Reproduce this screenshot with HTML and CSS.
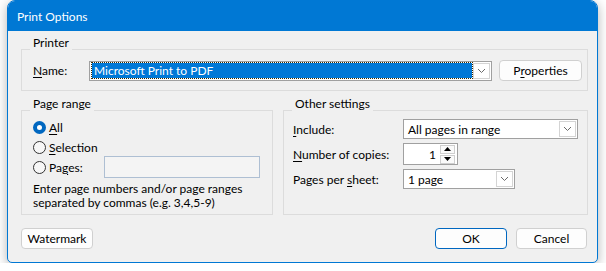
FILE: index.html
```html
<!DOCTYPE html>
<html lang="en">
<head>
    <meta charset="UTF-8">
    <meta name="viewport" content="width=device-width, initial-scale=1.0">
    <title>Print Options</title>
    <link rel="stylesheet" href="styles.css">
</head>
<body>
    <div class="window">
        <div class="titlebar">Print Options</div>

        <div class="dialog-body">
            <!-- Printer -->
            <div class="group printer-group">
                <span class="group-title">Printer</span>
                <div class="printer-row">
                    <span class="field-label name-label"><u>N</u>ame:</span>
                    <div class="combo name-combo">
                        <span class="combo-value"><span class="selected-text">Microsoft Print to PDF</span></span>
                        <span class="combo-arrow">
                            <svg width="9" height="6" viewBox="0 0 9 6"><path d="M1 1 L4.5 4.5 L8 1" fill="none" stroke="#6b6b6b" stroke-width="1"/></svg>
                        </span>
                    </div>
                    <button class="btn props-btn">P<u>r</u>operties</button>
                </div>
            </div>

            <div class="groups-row">
                <!-- Page range -->
                <div class="group range-group">
                    <span class="group-title">Page range</span>
                    <div class="radio-row">
                        <span class="radio checked"></span>
                        <span><u>A</u>ll</span>
                    </div>
                    <div class="radio-row">
                        <span class="radio"></span>
                        <span><u>S</u>election</span>
                    </div>
                    <div class="radio-row">
                        <span class="radio"></span>
                        <span class="pages-label">Pa<u>g</u>es:</span>
                        <span class="pages-input"></span>
                    </div>
                    <p class="hint">Enter page numbers and/or page ranges<br>separated by commas (e.g. 3,4,5-9)</p>
                </div>

                <!-- Other settings -->
                <div class="group other-group">
                    <span class="group-title">Other settings</span>
                    <div class="setting-row">
                        <span class="setting-label"><u>I</u>nclude:</span>
                        <div class="combo include-combo">
                            <span class="combo-value">All pages in range</span>
                            <span class="combo-arrow">
                                <svg width="9" height="6" viewBox="0 0 9 6"><path d="M1 1 L4.5 4.5 L8 1" fill="none" stroke="#6b6b6b" stroke-width="1"/></svg>
                            </span>
                        </div>
                    </div>
                    <div class="setting-row copies-row">
                        <span class="setting-label"><u>N</u>umber of copies:</span>
                        <div class="spin">
                            <span class="spin-value">1</span>
                            <span class="spin-buttons">
                                <span class="spin-btn">
                                    <svg width="7" height="4" viewBox="0 0 7 4"><path d="M0 4 L3.5 0 L7 4 Z" fill="#000"/></svg>
                                </span>
                                <span class="spin-btn">
                                    <svg width="7" height="4" viewBox="0 0 7 4"><path d="M0 0 L3.5 4 L7 0 Z" fill="#000"/></svg>
                                </span>
                            </span>
                        </div>
                    </div>
                    <div class="setting-row">
                        <span class="setting-label">Pages per <u>s</u>heet:</span>
                        <div class="combo sheet-combo">
                            <span class="combo-value">1 page</span>
                            <span class="combo-arrow">
                                <svg width="9" height="6" viewBox="0 0 9 6"><path d="M1 1 L4.5 4.5 L8 1" fill="none" stroke="#6b6b6b" stroke-width="1"/></svg>
                            </span>
                        </div>
                    </div>
                </div>
            </div>

            <div class="footer">
                <button class="btn watermark-btn">Watermark</button>
                <button class="btn ok-btn">OK</button>
                <button class="btn cancel-btn">Cancel</button>
            </div>
        </div>
    </div>
</body>
</html>
```

FILE: styles.css
```css
* {
    box-sizing: border-box;
}

body {
    margin: 0;
    background: #fff;
    color: #000;
    font-family: "Segoe UI", Lato, "Noto Sans", sans-serif;
    font-size: 12px;
}

u {
    text-underline-offset: 2px;
}

.window {
    margin-left: 7px;
    width: 591px;
    height: 263px;
    border: 1px solid #0078d4;
    border-radius: 8px 8px 5px 5px;
    background: #f0f0f0;
    box-shadow: 0 3px 12px rgba(0, 0, 0, 0.3);
    overflow: hidden;
    display: flex;
    flex-direction: column;
}

.titlebar {
    height: 30px;
    line-height: 31px;
    padding-left: 9px;
    background: #0078d4;
    color: #fff;
}

.dialog-body {
    padding: 18px 9px 0 13px;
    display: flex;
    flex-direction: column;
}

/* Group boxes */
.group {
    position: relative;
    border: 1px solid #dcdcdc;
}

.group-title {
    position: absolute;
    top: -15px;
    left: 8px;
    padding: 0 3px;
    line-height: 16px;
    background: #f0f0f0;
}

.printer-group {
    height: 42px;
    padding: 10px 0 0 11px;
}

.printer-row {
    display: flex;
    align-items: center;
    height: 21px;
}

.name-label {
    width: 56px;
}

.groups-row {
    display: flex;
    gap: 10px;
    margin-top: 19px;
}

.range-group {
    width: 252px;
    height: 105px;
    padding: 6px 0 0 11px;
}

.other-group {
    width: 305px;
    height: 105px;
    padding: 8px 0 0 9px;
}

/* Combo boxes */
.combo {
    display: flex;
    align-items: center;
    height: 20px;
    border: 1px solid #a0a0a0;
    background: #fff;
}

.combo-value {
    flex: 1;
    padding-left: 4px;
    white-space: nowrap;
}

.combo-arrow {
    width: 17px;
    height: 16px;
    margin-right: 1px;
    border: 1px solid #d4d4d4;
    display: flex;
    justify-content: center;
    align-items: center;
}

.name-combo {
    width: 403px;
}

.name-combo .combo-value {
    padding: 0 1px 0 2px;
}

.selected-text {
    display: block;
    height: 15px;
    line-height: 15px;
    padding-left: 2px;
    background: #0078d7;
    color: #fff;
    outline: 1px dotted #3a2a00;
}

.include-combo {
    width: 175px;
}

.sheet-combo {
    width: 112px;
}

/* Buttons */
.btn {
    height: 21px;
    padding: 0;
    border: 1px solid #d0d0d0;
    border-radius: 4px;
    background: #fdfdfd;
    color: #000;
    font: inherit;
}

.props-btn {
    width: 83px;
    margin-left: 7px;
}

/* Radios */
.radio-row {
    display: flex;
    align-items: center;
    height: 20px;
}

.radio {
    width: 13px;
    height: 13px;
    margin-right: 3px;
    border: 1px solid #333;
    border-radius: 50%;
    background: #f7f7f7;
}

.radio.checked {
    border: 4px solid #0067c0;
    background: #fff;
}

.pages-label {
    width: 55px;
}

.pages-input {
    width: 156px;
    height: 22px;
    border: 1px solid #aebfd3;
    background: #f4f4f4;
}

.hint {
    margin: 5px 0 0;
    line-height: 14px;
}

/* Other settings */
.setting-row {
    display: flex;
    align-items: center;
    height: 20px;
    margin-bottom: 4px;
}

.copies-row {
    height: 22px;
}

.setting-label {
    width: 110px;
}

.spin {
    display: flex;
    align-items: center;
    width: 55px;
    height: 22px;
    border: 1px solid #a0a0a0;
    background: #fff;
}

.spin-value {
    flex: 1;
    text-align: right;
    padding-right: 4px;
}

.spin-buttons {
    display: flex;
    flex-direction: column;
    gap: 1px;
    margin-right: 2px;
}

.spin-btn {
    width: 15px;
    height: 9px;
    border: 1px solid #cfcfcf;
    background: #fafafa;
    display: flex;
    justify-content: center;
    align-items: center;
}

/* Footer */
.footer {
    display: flex;
    margin-top: 13px;
    padding-right: 1px;
}

.watermark-btn {
    width: 72px;
    margin-right: auto;
}

.ok-btn {
    width: 72px;
    margin-right: 9px;
    border-color: #0067c0;
}

.cancel-btn {
    width: 71px;
}
```
